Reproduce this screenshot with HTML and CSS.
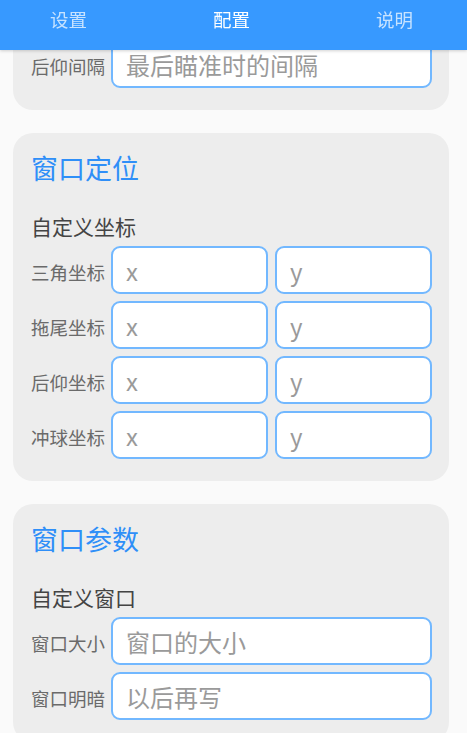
FILE: index.html
```html
<!DOCTYPE html>
<html lang="zh">
<head>
<meta charset="utf-8">
<title>配置</title>
<link rel="stylesheet" href="styles.css">
</head>
<body>
<header class="tabbar">
  <span class="tab">设置</span>
  <span class="tab active">配置</span>
  <span class="tab">说明</span>
</header>
<main class="page">
  <section class="card card-partial">
    <div class="row">
      <span class="label">后仰间隔</span>
      <input class="field" type="text" placeholder="最后瞄准时的间隔">
    </div>
  </section>

  <section class="card">
    <h2 class="card-title">窗口定位</h2>
    <h3 class="card-sub">自定义坐标</h3>
    <div class="rows">
      <div class="row">
        <span class="label">三角坐标</span>
        <input class="field" type="text" placeholder="x">
        <input class="field" type="text" placeholder="y">
      </div>
      <div class="row">
        <span class="label">拖尾坐标</span>
        <input class="field" type="text" placeholder="x">
        <input class="field" type="text" placeholder="y">
      </div>
      <div class="row">
        <span class="label">后仰坐标</span>
        <input class="field" type="text" placeholder="x">
        <input class="field" type="text" placeholder="y">
      </div>
      <div class="row">
        <span class="label">冲球坐标</span>
        <input class="field" type="text" placeholder="x">
        <input class="field" type="text" placeholder="y">
      </div>
    </div>
  </section>

  <section class="card">
    <h2 class="card-title">窗口参数</h2>
    <h3 class="card-sub">自定义窗口</h3>
    <div class="rows">
      <div class="row">
        <span class="label">窗口大小</span>
        <input class="field" type="text" placeholder="窗口的大小">
      </div>
      <div class="row">
        <span class="label">窗口明暗</span>
        <input class="field" type="text" placeholder="以后再写">
      </div>
    </div>
  </section>
</main>
</body>
</html>
```

FILE: styles.css
```css
* { box-sizing: border-box; }

html, body {
  margin: 0;
  padding: 0;
  background: #fafafa;
  font-family: "Noto Sans CJK SC", "Noto Sans", "Liberation Sans", sans-serif;
}

body {
  height: 733px;
  overflow: hidden;
}

.tabbar {
  position: fixed;
  top: 0;
  left: 0;
  right: 0;
  height: 50px;
  z-index: 10;
  background: #3799ff;
  box-shadow: 0 1px 3px rgba(0, 0, 0, 0.18);
  display: flex;
  justify-content: space-between;
  align-items: flex-start;
  padding: 0 54px 0 50px;
}

.tab {
  font-size: 18.5px;
  line-height: 38px;
  color: rgba(255, 255, 255, 0.72);
}

.tab.active {
  color: #ffffff;
}

.page {
  display: flex;
  flex-direction: column;
  gap: 23px;
  padding: 0 18px 0 13px;
}

.card {
  background: #ededed;
  border-radius: 20px;
  padding: 16px 17px 22px 18px;
}

.card-partial {
  padding-top: 40px;
  border-radius: 0 0 20px 20px;
}

.card-title {
  margin: 0;
  font-size: 27px;
  font-weight: normal;
  line-height: 38px;
  color: #2f8ff8;
}

.card-sub {
  margin: 24px 0 5px;
  font-size: 21px;
  font-weight: normal;
  line-height: 30px;
  color: #444444;
}

.rows {
  display: flex;
  flex-direction: column;
  gap: 7px;
}

.row {
  display: flex;
  align-items: center;
  gap: 7px;
  height: 48px;
}

.label {
  flex: 0 0 74px;
  margin-right: -1px;
  padding-top: 4px;
  font-size: 18.5px;
  line-height: 24px;
  color: #6a6a6a;
  white-space: nowrap;
}

.field {
  flex: 1 1 0;
  min-width: 0;
  height: 48px;
  border: 2px solid #72b8ff;
  border-radius: 9px;
  background: #ffffff;
  padding: 0 13px;
  font-family: "Noto Sans CJK SC", "Roboto", sans-serif;
  font-size: 24px;
  color: #333333;
  outline: none;
}

.field::placeholder {
  color: #9a9a9a;
}
```
